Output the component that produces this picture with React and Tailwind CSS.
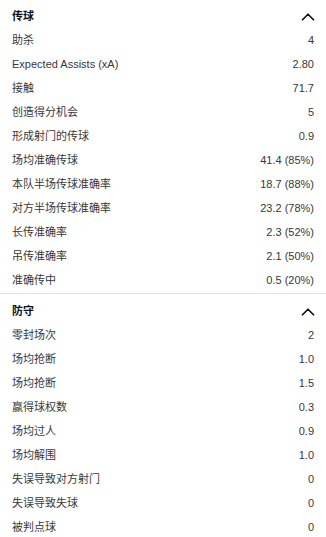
import { ChevronUp } from "lucide-react";

const passing = [
  ["助杀", "4"],
  ["Expected Assists (xA)", "2.80"],
  ["接触", "71.7"],
  ["创造得分机会", "5"],
  ["形成射门的传球", "0.9"],
  ["场均准确传球", "41.4 (85%)"],
  ["本队半场传球准确率", "18.7 (88%)"],
  ["对方半场传球准确率", "23.2 (78%)"],
  ["长传准确率", "2.3 (52%)"],
  ["吊传准确率", "2.1 (50%)"],
  ["准确传中", "0.5 (20%)"],
];

const defending = [
  ["零封场次", "2"],
  ["场均抢断", "1.0"],
  ["场均抢断", "1.5"],
  ["赢得球权数", "0.3"],
  ["场均过人", "0.9"],
  ["场均解围", "1.0"],
  ["失误导致对方射门", "0"],
  ["失误导致失球", "0"],
  ["被判点球", "0"],
];

function Section({ title, rows }) {
  return (
    <div>
      <div className="flex h-[23px] items-center justify-between">
        <span className="font-bold text-[#111]">{title}</span>
        <ChevronUp className="mr-[-5px] h-[22px] w-[22px] text-[#111]" strokeWidth={1.9} />
      </div>
      {rows.map(([label, value], i) => (
        <div key={i} className="flex h-6 items-center justify-between">
          <span>{label}</span>
          <span>{value}</span>
        </div>
      ))}
    </div>
  );
}

export default function App() {
  return (
    <div
      className="w-[326px] bg-white text-[11px] text-[#383838]"
      style={{ fontFamily: '"Liberation Sans", "Noto Sans CJK SC", sans-serif' }}
    >
      <div className="px-3 pt-[5px]">
        <Section title="传球" rows={passing} />
      </div>
      <div className="mt-px h-px bg-[#e3e3e3]" />
      <div className="px-3 pt-[6px]">
        <Section title="防守" rows={defending} />
      </div>
    </div>
  );
}
